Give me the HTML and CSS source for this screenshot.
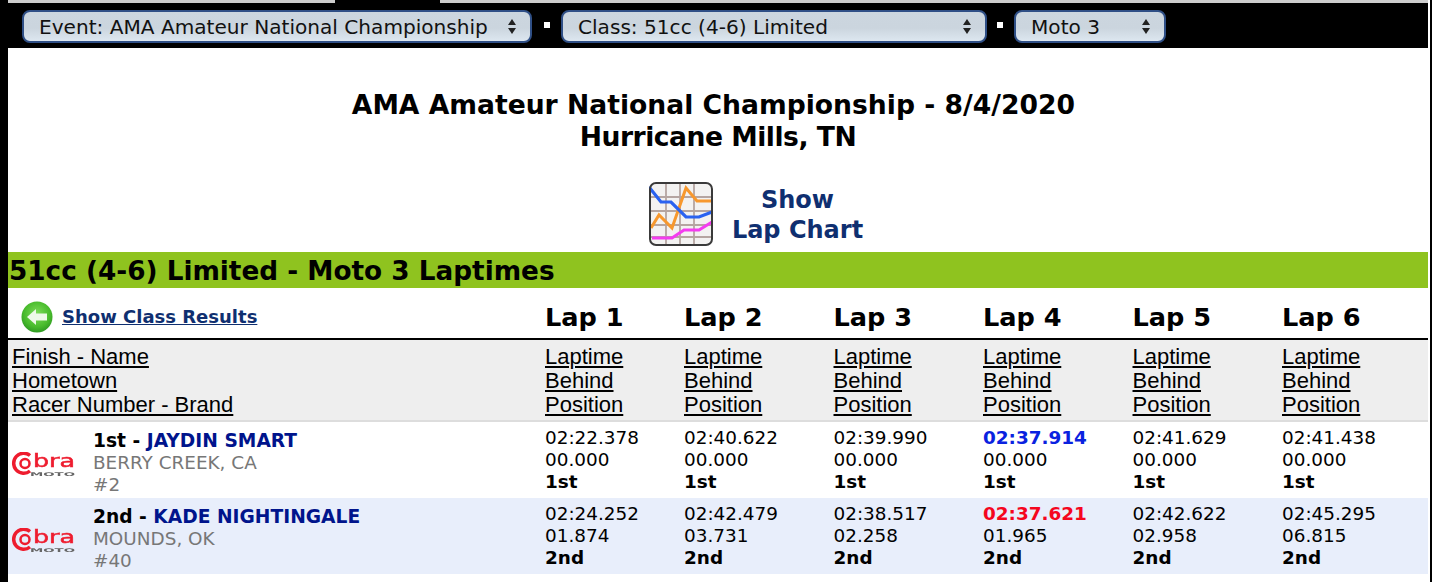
FILE: index.html
```html
<!DOCTYPE html>
<html lang="en">
<head>
    <meta charset="UTF-8">
    <title>Lap Times</title>
    <link rel="stylesheet" href="styles.css">
</head>
<body>
    <div class="page">
        <!-- Cut-off tabs above the picker bar -->
        <div class="top-strip">
            <span class="tab tab-left"></span>
            <span class="tab-gap"></span>
            <span class="tab tab-right"></span>
        </div>

        <!-- Event / class / moto pickers -->
        <div class="picker-bar">
            <div class="picker picker-event">Event: AMA Amateur National Championship<span class="arrows"></span></div>
            <span class="dot"></span>
            <div class="picker picker-class">Class: 51cc (4-6) Limited<span class="arrows"></span></div>
            <span class="dot dot-tight"></span>
            <div class="picker picker-moto">Moto 3<span class="arrows"></span></div>
        </div>

        <h1 class="event-title">AMA Amateur National Championship - 8/4/2020&nbsp;<br><span class="event-place">Hurricane Mills, TN</span></h1>

        <div class="chart-link">
            <svg class="chart-icon" width="64" height="64" viewBox="0 0 64 64">
                <rect x="1" y="1" width="62" height="62" rx="6" fill="#f3f2f1"/>
                <g class="chart-lines">
                    <path d="M17 2V62M31 2V62M45 2V62M2 15H62M2 29H62M2 43H62M2 55H62" stroke="#b5a5a1" stroke-width="1.800" fill="none"/>
                    <path d="M2 46L10 33L23 46L37 6L48 19H62" stroke="#f7982e" stroke-width="3" fill="none"/>
                    <path d="M0 5L12 20H22L37 35H50L63 30" stroke="#2a62f0" stroke-width="3.200" fill="none"/>
                    <path d="M3 56H23L35 48H50L63 40" stroke="#f43cf0" stroke-width="3.200" fill="none"/>
                </g>
                <rect x="1" y="1" width="62" height="62" rx="6" fill="none" stroke="#3a3a3a" stroke-width="2"/>
            </svg>
            <a class="chart-text" href="#">Show<br>Lap Chart</a>
        </div>

        <h2 class="class-heading">51cc (4-6) Limited - Moto 3 Laptimes</h2>

        <table class="laps">
            <colgroup>
                <col class="col-racer">
                <col class="col-first">
                <col class="col-lap"><col class="col-lap"><col class="col-lap"><col class="col-lap"><col>
            </colgroup>
            <tr class="lap-row">
                <td>
                    <div class="back-link">
                        <svg width="32" height="32" viewBox="0 0 32 32">
                            <defs>
                                <radialGradient id="backGlow" cx="50%" cy="40%" r="60%">
                                    <stop offset="0" stop-color="#7fdc5a"/>
                                    <stop offset="0.7" stop-color="#48bb2c"/>
                                    <stop offset="1" stop-color="#2f9a22"/>
                                </radialGradient>
                            </defs>
                            <circle cx="16" cy="16" r="15.500" fill="url(#backGlow)"/>
                            <path d="M6 16L15 8V12.500H26V19.500H15V24Z" fill="#eef9e8"/>
                        </svg>
                        <a href="#">Show Class Results</a>
                    </div>
                </td>
                <th>Lap 1</th><th>Lap 2</th><th>Lap 3</th><th>Lap 4</th><th>Lap 5</th><th>Lap 6</th>
            </tr>
            <tr class="head-row">
                <td><u>Finish - Name</u><br><u>Hometown</u><br><u>Racer Number - Brand</u></td>
                <td><u>Laptime</u><br><u>Behind</u><br><u>Position</u></td>
                <td><u>Laptime</u><br><u>Behind</u><br><u>Position</u></td>
                <td><u>Laptime</u><br><u>Behind</u><br><u>Position</u></td>
                <td><u>Laptime</u><br><u>Behind</u><br><u>Position</u></td>
                <td><u>Laptime</u><br><u>Behind</u><br><u>Position</u></td>
                <td><u>Laptime</u><br><u>Behind</u><br><u>Position</u></td>
            </tr>
            <tr class="racer-row">
                <td class="racer-cell">
                    <div class="racer">
                        <svg class="brand" width="66" height="25" viewBox="0 0 66 25">
                            <path d="M19 3.500A10 10 0 1 0 19 19" fill="none" stroke="#ee1c2e" stroke-width="3.500"/>
                            <circle cx="14" cy="11.500" r="4.500" fill="none" stroke="#ee1c2e" stroke-width="2.500"/>
                            <text class="brand-name" x="22" y="15" textLength="42" lengthAdjust="spacingAndGlyphs">bra</text>
                            <text class="brand-sub" x="19" y="24" textLength="45" lengthAdjust="spacingAndGlyphs">MOTO</text>
                        </svg>
                        <div class="racer-info">
                            <b class="racer-name">1st - <a href="#">JAYDIN SMART</a></b><br>
                            <span class="muted">BERRY CREEK, CA</span><br>
                            <span class="muted">#2</span>
                        </div>
                    </div>
                </td>
                <td>02:22.378<br>00.000<br><b>1st</b></td>
                <td>02:40.622<br>00.000<br><b>1st</b></td>
                <td>02:39.990<br>00.000<br><b>1st</b></td>
                <td><b class="best">02:37.914</b><br>00.000<br><b>1st</b></td>
                <td>02:41.629<br>00.000<br><b>1st</b></td>
                <td>02:41.438<br>00.000<br><b>1st</b></td>
            </tr>
            <tr class="racer-row alt">
                <td class="racer-cell">
                    <div class="racer">
                        <svg class="brand" width="66" height="25" viewBox="0 0 66 25">
                            <path d="M19 3.500A10 10 0 1 0 19 19" fill="none" stroke="#ee1c2e" stroke-width="3.500"/>
                            <circle cx="14" cy="11.500" r="4.500" fill="none" stroke="#ee1c2e" stroke-width="2.500"/>
                            <text class="brand-name" x="22" y="15" textLength="42" lengthAdjust="spacingAndGlyphs">bra</text>
                            <text class="brand-sub" x="19" y="24" textLength="45" lengthAdjust="spacingAndGlyphs">MOTO</text>
                        </svg>
                        <div class="racer-info">
                            <b class="racer-name">2nd - <a href="#">KADE NIGHTINGALE</a></b><br>
                            <span class="muted">MOUNDS, OK</span><br>
                            <span class="muted">#40</span>
                        </div>
                    </div>
                </td>
                <td>02:24.252<br>01.874<br><b>2nd</b></td>
                <td>02:42.479<br>03.731<br><b>2nd</b></td>
                <td>02:38.517<br>02.258<br><b>2nd</b></td>
                <td><b class="fast">02:37.621</b><br>01.965<br><b>2nd</b></td>
                <td>02:42.622<br>02.958<br><b>2nd</b></td>
                <td>02:45.295<br>06.815<br><b>2nd</b></td>
            </tr>
        </table>
    </div>
</body>
</html>
```

FILE: styles.css
```css
/* General */
html, body {
    margin: 0;
    height: 582px;
    overflow: hidden;
    background: #fff;
}

body {
    font-family: "DejaVu Sans", Verdana, sans-serif;
    color: #000;
}

.page {
    height: 582px;
    padding-right: 2px;
    box-sizing: border-box;
    border-left: 8px solid #000;
    border-right: 2px solid #000;
    background: #fff;
}

/* Tabs cut off by the top of the window */
.top-strip {
    display: flex;
    height: 4px;
    background: #000;
}

.tab {
    box-sizing: border-box;
    height: 3px;
    background: #cdcdcd;
}

.tab-left { width: 327px; }
.tab-gap { width: 105px; }
.tab-right { flex: 1; }

/* Picker bar */
.picker-bar {
    display: flex;
    align-items: center;
    height: 44px;
    padding: 1px 0 0 14px;
    box-sizing: border-box;
    background: #000;
}

.picker {
    display: flex;
    justify-content: space-between;
    align-items: center;
    box-sizing: border-box;
    height: 33px;
    padding: 0 14px 0 15px;
    font-size: 20.100px;
    color: #111;
    border: 2px solid #2f4f86;
    border-radius: 8px;
    background: linear-gradient(to bottom, #ccd6df, #cbd5de 55%, #dde7f0);
}

.picker-event { width: 510px; }
.picker-class { width: 426px; }
.picker-moto { width: 152px; }

.arrows {
    display: flex;
    flex-direction: column;
    gap: 3px;
}

.arrows::before,
.arrows::after {
    content: "";
    width: 0;
    height: 0;
    border-left: 4px solid transparent;
    border-right: 4px solid transparent;
}

.arrows::before { border-bottom: 6px solid #222; }
.arrows::after { border-top: 6px solid #222; }

.dot {
    width: 6px;
    height: 6px;
    margin: 0 11px 4px 12px;
    background: #fff;
}

.dot-tight {
    margin-left: 10px;
}

/* Titles */
.event-title {
    margin: 0;
    padding-top: 41px;
    text-align: center;
    font-size: 26.600px;
    line-height: 32px;
    font-weight: bold;
}

.event-place {
    letter-spacing: -0.500px;
}

.chart-link {
    display: flex;
    justify-content: center;
    align-items: center;
    gap: 19px;
    margin-top: 29px;
    padding-left: 76px;
    height: 64px;
}

.chart-lines {
    filter: blur(0.4px);
}

.chart-text {
    margin-top: 2px;
    font-size: 24px;
    line-height: 30px;
    font-weight: bold;
    text-align: center;
    color: #0f2f70;
    text-decoration: none;
}

.class-heading {
    margin: 6px 0 0;
    padding-left: 1px;
    height: 36px;
    line-height: 38px;
    font-size: 26.300px;
    font-weight: bold;
    background: #8fc31f;
}

/* Lap table */
.laps {
    width: 100%;
    border-collapse: separate;
    border-spacing: 0;
    table-layout: fixed;
}

.col-racer { width: 537px; }
.col-first { width: 139px; }
.col-lap { width: 149.500px; }

.laps td, .laps th {
    padding: 0;
    vertical-align: top;
}

.lap-row td, .lap-row th {
    height: 52px;
    box-sizing: border-box;
    vertical-align: middle;
    border-bottom: 2px solid #000;
}

.lap-row th {
    text-align: left;
    font-size: 25.600px;
    padding-top: 8px;
}

.back-link {
    display: flex;
    align-items: center;
    gap: 9px;
    padding: 8px 0 0 13px;
}

.back-link a {
    margin-top: -2px;
    font-size: 18px;
    font-weight: bold;
    color: #0f2f70;
}

.head-row td {
    padding: 5px 0 3px;
    font-family: "Liberation Sans", Arial, sans-serif;
    font-size: 22px;
    line-height: 24px;
    background: #eee;
    border-bottom: 2px solid #ddd;
}

.head-row td:first-child {
    padding-left: 4px;
}

.racer-row td {
    height: 76px;
    padding-top: 5px;
    box-sizing: border-box;
    font-size: 18.400px;
    line-height: 22px;
}

.racer-row td.racer-cell {
    padding-top: 8px;
}

.racer-row.alt td {
    background: #e8eefb;
}

.racer {
    display: flex;
    align-items: center;
}

/* Brand logo */
.brand {
    flex: none;
    margin: 2px 16px 0 3px;
    filter: blur(0.5px);
}

.brand-name {
    font-size: 17px;
    fill: #ee1c2e;
    stroke: #ee1c2e;
    stroke-width: 0.500px;
}

.brand-sub {
    font-size: 5px;
    font-weight: bold;
    fill: #666;
}

.racer-name {
    font-size: 18.670px;
}

.racer-info a {
    color: #00148c;
    text-decoration: none;
}

.muted { color: #777; }
.best { color: #0a22e0; }
.fast { color: #f5061e; }
```
